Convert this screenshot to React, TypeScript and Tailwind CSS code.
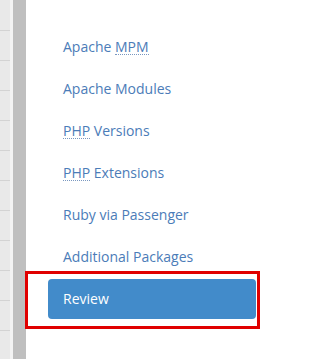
import type { ReactNode } from "react";

const steps: { label: ReactNode; active?: boolean }[] = [
  { label: <>Apache <Abbr>MPM</Abbr></> },
  { label: "Apache Modules" },
  { label: <><Abbr>PHP</Abbr> Versions</> },
  { label: <><Abbr>PHP</Abbr> Extensions</> },
  { label: "Ruby via Passenger" },
  { label: "Additional Packages" },
  { label: "Review", active: true },
];

function Abbr({ children }: { children: ReactNode }) {
  return (
    <abbr className="no-underline border-b border-dotted border-[#7a98c0] leading-[14px] inline-block">
      {children}
    </abbr>
  );
}

function SideStrip() {
  return (
    <div className="flex h-full shrink-0">
      <div className="flex w-[10px] flex-col bg-[#e9e9e9]">
        <div className="h-[30px] shrink-0" />
        {Array.from({ length: 11 }).map((_, i) => (
          <div key={i} className="h-[30px] shrink-0 border-t border-[#d3d3d3]" />
        ))}
      </div>
      <div className="w-[3px] bg-[#f3f3f3]" />
      <div className="w-[13px] bg-[#bfbfbf]" />
    </div>
  );
}

export default function App() {
  return (
    <div
      className="relative flex h-[359px] w-[271px] overflow-hidden bg-white"
      style={{ fontFamily: '"Open Sans", "Noto Sans", sans-serif' }}
    >
      <SideStrip />
      <ul className="ml-[22px] mt-[27px] flex w-[208px] flex-col gap-[2px] text-[14px]">
        {steps.map((s, i) => (
          <li key={i}>
            <a
              className={
                s.active
                  ? "block rounded-[4px] bg-[#428bca] px-[15px] py-[10px] leading-[20px] text-white"
                  : "block rounded-[4px] px-[15px] py-[10px] leading-[20px] text-[#4b7cb8]"
              }
            >
              {s.label}
            </a>
          </li>
        ))}
      </ul>
      <div className="pointer-events-none absolute left-[25px] top-[271px] h-[58px] w-[235px] border-[3px] border-[#e00000]" />
    </div>
  );
}
